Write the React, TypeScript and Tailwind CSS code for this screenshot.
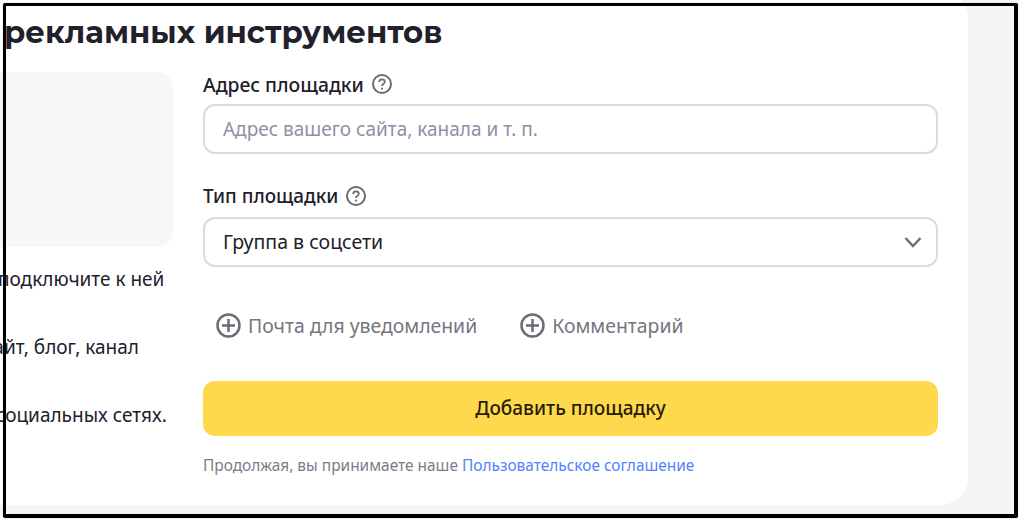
import React from "react";

const HelpIcon: React.FC = () => (
  <svg width="20" height="20" viewBox="0 0 20 20" fill="none" stroke="#6b6c75" strokeWidth="2" className="shrink-0">
    <circle cx="10" cy="10" r="9" />
    <path d="M7.2 8c0-1.6 1.2-2.6 2.8-2.6s2.8 1 2.8 2.4c0 2.2-2.8 2.2-2.8 4.2" strokeWidth="1.7" />
    <circle cx="10" cy="14.6" r="1.1" fill="#6b6c75" stroke="none" />
  </svg>
);

const PlusIcon: React.FC = () => (
  <svg width="25" height="25" viewBox="0 0 25 25" fill="none" stroke="#6b6c75" strokeWidth="2.5" className="shrink-0">
    <circle cx="12.5" cy="12.5" r="11" />
    <path d="M12.5 6v13M6 12.5h13" />
  </svg>
);

const Chevron: React.FC = () => (
  <svg width="20" height="12" viewBox="0 0 20 12" fill="none" stroke="#6b6c75" strokeWidth="2.4" className="shrink-0">
    <path d="M2.5 2l7.5 8 7.5-8" />
  </svg>
);

const AddLink: React.FC<{ label: string }> = ({ label }) => (
  <button className="flex items-center gap-[7px] text-[19.4px] leading-6 text-[#75767e]">
    <PlusIcon />
    {label}
  </button>
);

const App: React.FC = () => {
  return (
    <div className="relative h-[520px] w-[1021px] overflow-hidden bg-white font-['Noto_Sans',sans-serif] text-[#21202b]">
      <div className="h-[518px] w-[1018px] overflow-hidden bg-[#f4f5f7]">
        <div className="mt-[-10px] h-[515px] w-[968px] rounded-r-[28px] bg-white pt-[20px]">
          <h1 className="ml-[4px] whitespace-nowrap font-['Montserrat','Noto_Sans',sans-serif] text-[30.75px] font-bold leading-[44px]">
            рекламных инструментов
          </h1>
          <div className="mt-[8px] flex gap-[30px] pt-[10px]">
            <div className="w-[173px] shrink-0 text-[19px] leading-6">
              <div className="mb-[20px] h-[175px] rounded-r-2xl bg-[#f6f7f9]" />
              <p className="ml-[-2px] whitespace-nowrap">подключите к ней</p>
              <p className="ml-[-16px] mt-[44px] whitespace-nowrap">сайт, блог, канал</p>
              <p className="ml-[-4px] mt-[44px] whitespace-nowrap">социальных сетях.</p>
            </div>
            <div className="w-[735px] shrink-0">
              <label className="flex h-6 items-center gap-2 text-[19.35px] font-medium">
                Адрес площадки
                <HelpIcon />
              </label>
              <input
                placeholder="Адрес вашего сайта, канала и т. п."
                className="mt-2 h-[50px] w-full rounded-xl border-2 border-[#d9dae7] px-[18px] text-[19px] outline-none placeholder:text-[#8f90a5]"
              />
              <label className="mt-[30px] flex h-6 items-center gap-2 text-[18.9px] font-medium">
                Тип площадки
                <HelpIcon />
              </label>
              <button className="mt-[9px] flex h-[50px] w-full items-center justify-between rounded-xl border-2 border-[#d9dae7] pl-[18px] pr-[13px] text-[19.5px]">
                Группа в соцсети
                <Chevron />
              </button>
              <div className="mt-[46px] flex gap-[43px] pl-[13px]">
                <AddLink label="Почта для уведомлений" />
                <AddLink label="Комментарий" />
              </div>
              <button className="mt-[43px] h-[55px] w-full rounded-xl bg-[#ffd94c] text-[19px] font-medium text-[#2a1b0a]">
                Добавить площадку
              </button>
              <p className="mt-[19px] text-[15.45px] leading-5 text-[#7b7c88]">
                Продолжая, вы принимаете наше{" "}
                <a href="#" className="text-[#5282ff]">
                  Пользовательское соглашение
                </a>
              </p>
            </div>
          </div>
        </div>
      </div>
      <div className="pointer-events-none absolute left-[3px] top-[3px] h-[515px] w-[1015px] rounded-[2px] border-b-4 border-l-[3px] border-r-4 border-t-[3px] border-black shadow-[0_0_1px_#777777]" />
    </div>
  );
};

export default App;
